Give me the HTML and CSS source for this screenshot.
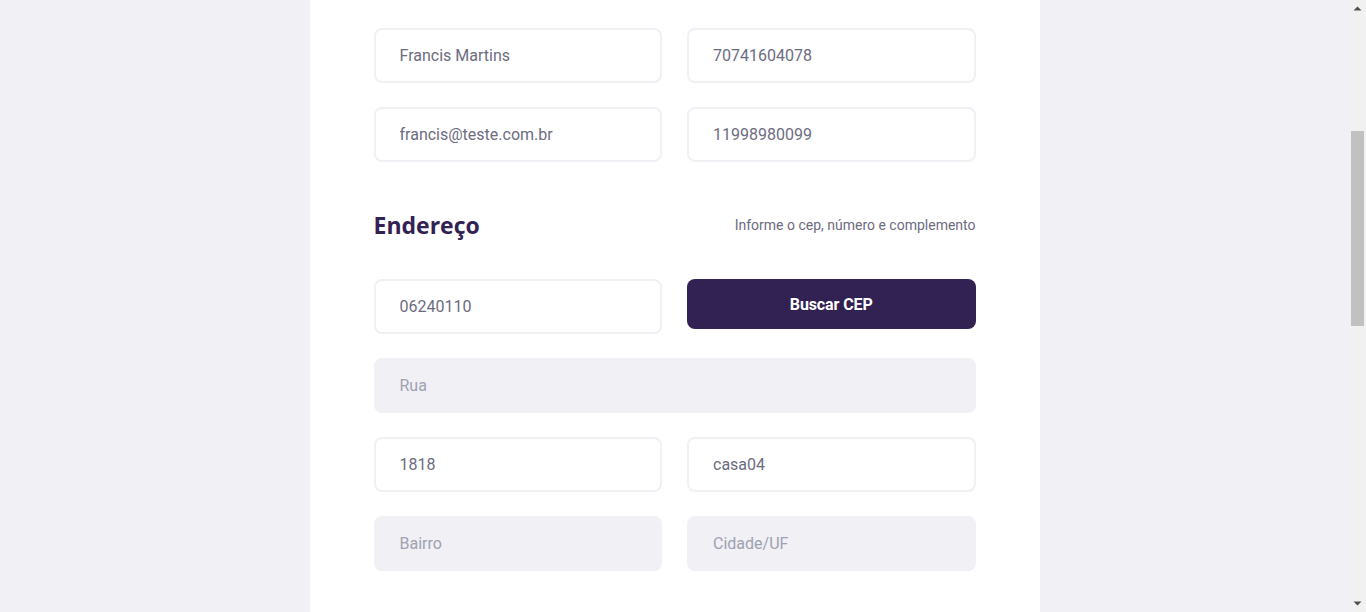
FILE: index.html
```html
<!DOCTYPE html>
<html lang="pt-BR">
<head>
<meta charset="utf-8">
<title>Ecoleta - Cadastro</title>
<link rel="stylesheet" href="styles.css">
</head>
<body>
<main class="viewport" id="viewport">
<div class="page">
  <header class="header">
    <div class="logo">
      <svg width="40" height="40" viewBox="0 0 40 40"><circle cx="20" cy="20" r="18" fill="#34cb79"/><path d="M12 24c4-10 12-12 16-12-1 8-6 14-16 12z" fill="#fff"/></svg>
      <span class="logo-text">Ecoleta</span>
    </div>
    <a class="back" href="#">Voltar para home</a>
  </header>

  <form class="form">
    <h1 class="title">Cadastro do<br>ponto de coleta</h1>

    <section class="fieldset">
      <div class="legend"><h2>Dados</h2></div>
      <div class="rows">
        <div class="row">
          <input class="field" type="text" value="Francis Martins">
          <input class="field" type="text" value="70741604078">
        </div>
        <div class="row">
          <input class="field" type="text" value="francis@teste.com.br">
          <input class="field" type="text" value="11998980099">
        </div>
      </div>
    </section>

    <section class="fieldset address">
      <div class="legend"><h2>Endereço</h2><span>Informe o cep, número e complemento</span></div>
      <div class="rows">
        <div class="row top">
          <input class="field" type="text" value="06240110">
          <button class="btn" type="button">Buscar CEP</button>
        </div>
        <div class="row single">
          <input class="field readonly" type="text" placeholder="Rua" readonly>
        </div>
        <div class="row">
          <input class="field" type="text" value="1818">
          <input class="field" type="text" value="casa04">
        </div>
        <div class="row">
          <input class="field readonly" type="text" placeholder="Bairro" readonly>
          <input class="field readonly" type="text" placeholder="Cidade/UF" readonly>
        </div>
      </div>
    </section>

    <section class="fieldset items">
      <div class="legend"><h2>Ítens de coleta</h2><span>Selecione um ou mais ítens abaixo</span></div>
      <ul class="grid">
        <li>Lâmpadas</li>
        <li>Pilhas e Baterias</li>
        <li>Papéis e Papelão</li>
        <li>Resíduos Eletrônicos</li>
        <li>Resíduos Orgânicos</li>
        <li>Óleo de Cozinha</li>
      </ul>
    </section>

    <button class="submit" type="button">Cadastrar ponto de coleta</button>
  </form>
</div>
</main>
<div class="scrollbar" aria-hidden="true">
  <div class="sb-btn"><svg width="9" height="5" viewBox="0 0 9 5"><path d="M0.5 4.5 L4.5 0.5 L8.5 4.5 Z" fill="#505050"/></svg></div>
  <div class="sb-track"><div class="sb-thumb"></div></div>
  <div class="sb-btn"><svg width="9" height="5" viewBox="0 0 9 5"><path d="M0.5 0.5 L8.5 0.5 L4.5 4.5 Z" fill="#505050"/></svg></div>
</div>
<script src="script.js"></script>
</body>
</html>
```

FILE: styles.css
```css
* {
  box-sizing: border-box;
}

html,
body {
  height: 100%;
}

body {
  margin: 0;
  display: flex;
  overflow: hidden;
  background: #f0f0f5;
  font-family: Roboto, "Liberation Sans", sans-serif;
  color: #6c6c80;
  -webkit-font-smoothing: antialiased;
}

.viewport {
  flex: 1;
  height: 100%;
  overflow: hidden;
}

.scrollbar {
  width: 17px;
  flex: none;
  height: 100%;
  display: flex;
  flex-direction: column;
  background: #f1f1f1;
}

.sb-btn {
  height: 17px;
  flex: none;
  display: flex;
  align-items: center;
  justify-content: center;
}

.sb-track {
  flex: 1;
  padding: 114px 2px 0;
}

.sb-thumb {
  height: 195px;
  background: #c1c1c1;
}

.page {
  width: 90%;
  max-width: 1100px;
  margin: 0 auto;
}

.header {
  padding-top: 32px;
  height: 74px;
  display: flex;
  justify-content: space-between;
  align-items: center;
}

.logo {
  display: flex;
  align-items: center;
  gap: 10px;
}

.logo-text {
  font-family: "Open Sans", sans-serif;
  font-weight: 700;
  font-size: 28px;
  color: #322153;
}

.back {
  color: #322153;
  font-weight: 700;
  text-decoration: none;
}

.form {
  max-width: 730px;
  margin: 18px auto 217px;
  background: #fff;
  padding: 64px;
  border-radius: 8px;
}

.title {
  margin: 0;
  font-family: "Open Sans", sans-serif;
  font-size: 36px;
  line-height: 49px;
  color: #322153;
}

.fieldset {
  margin-top: 64px;
}

.fieldset.address {
  margin-top: 49px;
}

.legend {
  height: 28px;
  margin-bottom: 40px;
  display: flex;
  justify-content: space-between;
  align-items: center;
}

.legend h2 {
  margin: 0;
  font-family: "Open Sans", sans-serif;
  font-weight: 700;
  font-size: 23px;
  line-height: 28px;
  color: #322153;
}

.legend span {
  font-size: 14px;
  font-weight: 400;
  color: #6c6c80;
}

.rows {
  display: flex;
  flex-direction: column;
  gap: 24px;
}

.row {
  display: grid;
  grid-template-columns: 1fr 1fr;
  column-gap: 25px;
  align-items: start;
}

.row.single {
  grid-template-columns: 1fr;
}

.field {
  width: 100%;
  height: 55px;
  padding: 0 24px;
  border: 2px solid #f0f0f5;
  border-radius: 8px;
  background: #fff;
  font-family: Roboto, sans-serif;
  font-size: 16px;
  color: #6c6c80;
  outline: none;
}

.field.readonly {
  background: #f0f0f5;
}

.field::placeholder {
  color: #a0a0b2;
}

.btn {
  height: 50px;
  border: 0;
  border-radius: 8px;
  background: #322153;
  color: #fff;
  font-family: Roboto, sans-serif;
  font-weight: 700;
  font-size: 16px;
  letter-spacing: -0.1px;
  cursor: pointer;
}

.grid {
  list-style: none;
  margin: 0;
  padding: 0;
  display: grid;
  grid-template-columns: repeat(3, 1fr);
  gap: 16px;
}

.grid li {
  height: 180px;
  background: #f5f5f5;
  border: 2px solid #f5f5f5;
  border-radius: 8px;
  display: flex;
  align-items: flex-end;
  justify-content: center;
  padding: 24px;
  text-align: center;
  color: #322153;
}

.submit {
  margin-top: 40px;
  width: 260px;
  height: 56px;
  border: 0;
  border-radius: 8px;
  background: #34cb79;
  color: #fff;
  font-family: Roboto, sans-serif;
  font-weight: 700;
  font-size: 16px;
}
```

FILE: script.js
```js
function go() { document.getElementById('viewport').scrollTop = 358; }
go();
window.addEventListener('load', go);
```
